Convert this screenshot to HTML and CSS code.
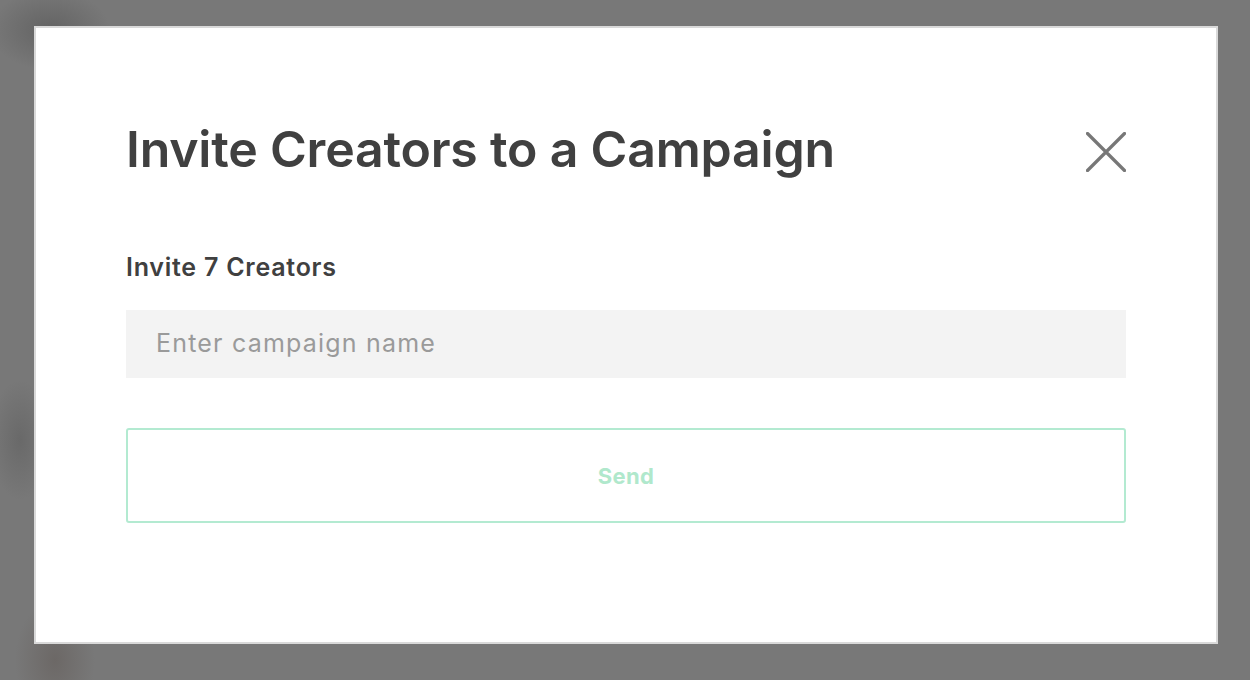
FILE: index.html
```html
<!DOCTYPE html>
<html>
<head>
<meta charset="utf-8">
<link rel="stylesheet" href="styles.css">
</head>
<body>
<div class="backdrop">
  <div class="modal">
    <div class="header">
      <h1 class="title">Invite Creators to a Campaign</h1>
      <button class="close" aria-label="Close">
        <svg width="40" height="40" viewBox="0 0 40 40"><path d="M1.5 1.5 L38.5 38.5 M38.5 1.5 L1.5 38.5" stroke="#777" stroke-width="3.2" stroke-linecap="round" fill="none"/></svg>
      </button>
    </div>
    <div class="label">Invite 7 Creators</div>
    <input class="field" type="text" placeholder="Enter campaign name">
    <button class="send">Send</button>
  </div>
</div>
</body>
</html>
```
FILE: styles.css
```css
html, body { margin: 0; padding: 0; }
body {
  width: 1250px;
  height: 680px;
  overflow: hidden;
  background: #777;
  font-family: Inter, "Liberation Sans", sans-serif;
}
.backdrop {
  width: 1250px;
  height: 680px;
  background:
    radial-gradient(ellipse 60px 40px at 50px 30px, rgba(60,60,60,0.35), transparent),
    radial-gradient(ellipse 40px 60px at 55px 660px, rgba(90,80,75,0.4), transparent),
    radial-gradient(ellipse 30px 60px at 20px 440px, rgba(70,70,70,0.3), transparent),
    #787878;
  padding-top: 26px;
  box-sizing: border-box;
}
.modal {
  margin-left: 34px;
  width: 1184px;
  height: 618px;
  box-sizing: border-box;
  background: #fff;
  border: 2px solid #d9d9d9;
  padding: 90px 90px 0 90px;
  display: flex;
  flex-direction: column;
}
.header {
  display: flex;
  justify-content: space-between;
  align-items: flex-start;
  height: 120px;
}
.title {
  margin: 0;
  font-size: 50px;
  font-weight: 600;
  color: #404040;
  letter-spacing: -0.2px;
  line-height: 64px;
  margin-top: -1px;
}
.close {
  border: 0;
  background: none;
  padding: 0;
  margin-top: 14px;
  width: 40px;
  height: 40px;
}
.close svg { display: block; }
.label {
  font-size: 25px;
  font-weight: 600;
  color: #404040;
  line-height: 32px;
  letter-spacing: 0.75px;
  margin-top: 13px;
}
.field {
  margin-top: 27px;
  height: 68px;
  border: 0;
  background: #f3f3f3;
  padding: 0 30px 2px 30px;
  font-family: inherit;
  font-size: 25px;
  letter-spacing: 1.2px;
  color: #404040;
  outline: none;
  box-sizing: border-box;
  width: 100%;
}
.field::placeholder { color: #9a9a9a; }
.send {
  margin-top: 50px;
  height: 95px;
  width: 100%;
  background: #fff;
  border: 2px solid #b3ead1;
  border-radius: 3px;
  color: #b0e8cc;
  font-family: inherit;
  font-size: 22px;
  letter-spacing: 0.4px;
  font-weight: 700;
}
```
